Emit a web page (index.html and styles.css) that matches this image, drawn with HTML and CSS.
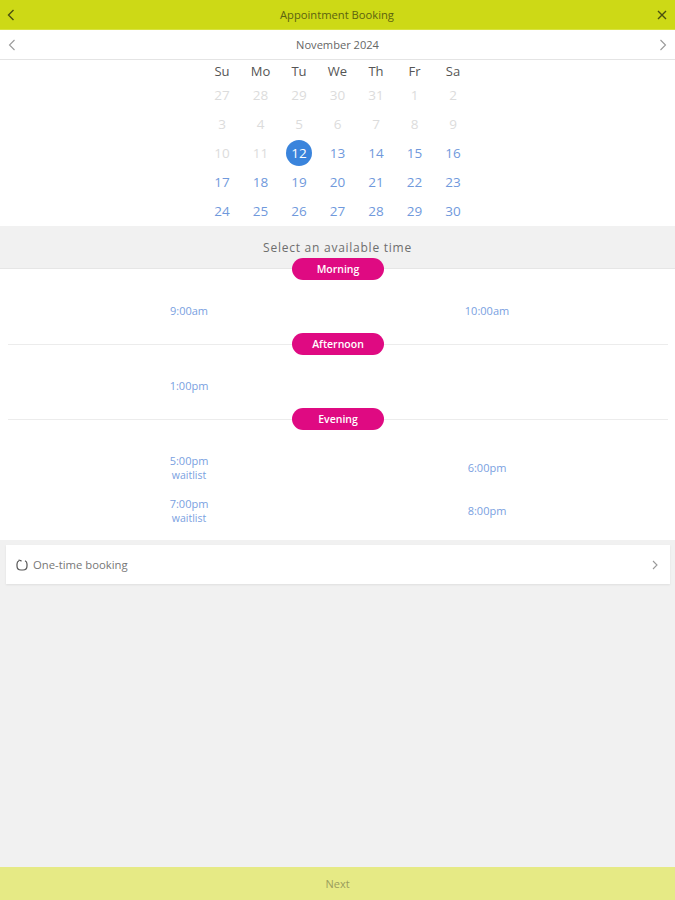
FILE: index.html
```html
<!DOCTYPE html>
<html lang="en">
<head>
  <meta charset="UTF-8" />
  <title>Appointment Booking</title>
  <link rel="stylesheet" href="styles.css">
</head>
<body>
  <div class="page">
    <header class="topbar">
      <svg class="icon" width="12" height="14" viewBox="0 0 12 14"><path d="M7.5 2 L2.5 7 L7.5 12" /></svg>
      <span class="topbar-title">Appointment Booking</span>
      <svg class="icon" width="12" height="12" viewBox="0 0 12 12"><path d="M2 2 L10 10 M10 2 L2 10" /></svg>
    </header>

    <div class="month-bar">
      <svg class="icon-light" width="10" height="14" viewBox="0 0 10 14"><path d="M7.5 2 L2.5 7 L7.5 12" /></svg>
      <span>November 2024</span>
      <svg class="icon-light" width="10" height="14" viewBox="0 0 10 14"><path d="M2.5 2 L7.5 7 L2.5 12" /></svg>
    </div>

    <div class="calendar">
      <div class="week week-head">
        <span>Su</span><span>Mo</span><span>Tu</span><span>We</span><span>Th</span><span>Fr</span><span>Sa</span>
      </div>
      <div class="week off">
        <span>27</span><span>28</span><span>29</span><span>30</span><span>31</span><span>1</span><span>2</span>
      </div>
      <div class="week off">
        <span>3</span><span>4</span><span>5</span><span>6</span><span>7</span><span>8</span><span>9</span>
      </div>
      <div class="week">
        <span class="muted">10</span><span class="muted">11</span><span><b class="today">12</b></span><span>13</span><span>14</span><span>15</span><span>16</span>
      </div>
      <div class="week">
        <span>17</span><span>18</span><span>19</span><span>20</span><span>21</span><span>22</span><span>23</span>
      </div>
      <div class="week">
        <span>24</span><span>25</span><span>26</span><span>27</span><span>28</span><span>29</span><span>30</span>
      </div>
    </div>

    <div class="select-title">Select an available time</div>

    <section class="times">
      <div class="period-head first"><span class="pill">Morning</span></div>
      <div class="slots">
        <a class="slot">9:00am</a>
        <a class="slot">10:00am</a>
      </div>

      <div class="period-head"><span class="pill">Afternoon</span></div>
      <div class="slots">
        <a class="slot">1:00pm</a>
      </div>

      <div class="period-head"><span class="pill">Evening</span></div>
      <div class="slots slots-evening">
        <a class="slot">5:00pm<small>waitlist</small></a>
        <a class="slot">6:00pm</a>
        <a class="slot">7:00pm<small>waitlist</small></a>
        <a class="slot">8:00pm</a>
      </div>
    </section>

    <div class="option-card">
      <svg class="repeat" width="12" height="12" viewBox="0 0 12 12"><path d="M3 1.8 C1.6 2.4 1 3.4 1 5 L1 7 C1 9.6 2.4 11 5 11 L7 11 C9.6 11 11 9.6 11 7 L11 5 C11 3.4 10.4 2.4 9 1.8" /><path d="M2.6 1 L5 1.6 L5 2.6" /></svg>
      <span class="option-label">One-time booking</span>
      <svg class="icon-light" width="8" height="10" viewBox="0 0 8 10"><path d="M2 1 L6 5 L2 9" /></svg>
    </div>

    <footer class="next-bar">Next</footer>
  </div>
</body>
</html>
```

FILE: styles.css
```css
* {
  box-sizing: border-box;
}
body {
  margin: 0;
  font-family: "Open Sans", sans-serif;
  background-color: #f1f1f1;
}
.page {
  display: flex;
  flex-direction: column;
  height: 900px;
}
svg path {
  fill: none;
}
.topbar {
  display: flex;
  justify-content: space-between;
  align-items: center;
  height: 30px;
  padding: 0 7px 0 6px;
  background-color: #cdd916;
  border-bottom: 1px solid #d8e23f;
  color: #5c6310;
  font-size: 11.2px;
}
.icon path {
  stroke: #4a5010;
  stroke-width: 1.4;
}
.icon-light path {
  stroke: #9a9a9a;
  stroke-width: 1.1;
}
.month-bar {
  display: flex;
  justify-content: space-between;
  align-items: center;
  height: 30px;
  padding: 0 7px;
  background-color: #fff;
  border-bottom: 1px solid #e4e4e4;
  color: #666;
  font-size: 11.1px;
}
.calendar {
  height: 166px;
  background-color: #fff;
}
.week {
  display: grid;
  grid-template-columns: repeat(7, 38.5px);
  justify-content: center;
  align-items: center;
  height: 29px;
  color: #7099dc;
  font-size: 13.5px;
  text-align: center;
}
.week-head {
  height: 20px;
  padding-top: 1px;
  color: #555;
  font-size: 13px;
}
.off,
.muted {
  color: #dcdcdc;
}
.today {
  display: block;
  width: 26px;
  height: 26px;
  margin: 0 auto;
  border-radius: 50%;
  background-color: #3a84dc;
  color: #fff;
  font-weight: 400;
  line-height: 26px;
}
.select-title {
  height: 43px;
  padding-top: 13px;
  border-bottom: 1px solid #e6e6e6;
  color: #6e6e6e;
  font-size: 12px;
  letter-spacing: 0.75px;
  text-align: center;
}
.times {
  height: 271px;
  background-color: #fff;
}
.period-head {
  display: flex;
  align-items: center;
  height: 22px;
  padding: 0 7px 0 8px;
}
.period-head::before,
.period-head::after {
  content: "";
  flex: 1;
  height: 1px;
  background-color: #ececec;
}
.period-head.first {
  margin-top: -11px;
  position: relative;
}
.period-head.first::before,
.period-head.first::after {
  background-color: transparent;
}
.pill {
  width: 92px;
  height: 22px;
  border-radius: 11px;
  background-color: #df0a82;
  color: #fff;
  font-size: 10.5px;
  font-weight: 600;
  line-height: 22px;
  text-align: center;
}
.slots {
  display: grid;
  grid-template-columns: 298px 298px;
  grid-auto-rows: 43px;
  padding: 9px 0 1px 40px;
}
.slots-evening {
  padding-top: 16px;
}
.slot {
  display: flex;
  flex-direction: column;
  justify-content: center;
  align-items: center;
  color: #7a9fdf;
  font-size: 11px;
  line-height: 14px;
}
.slot small {
  font-size: 10.5px;
}
.option-card {
  display: flex;
  justify-content: space-between;
  align-items: center;
  height: 39px;
  margin: 5px 5px 0 6px;
  padding: 0 11px 0 10px;
  background-color: #fff;
  box-shadow: 0 1px 2px rgba(0, 0, 0, 0.08);
}
.repeat path {
  stroke: #555;
  stroke-width: 1.2;
}
.option-label {
  flex: 1;
  margin-left: 5px;
  color: #777;
  font-size: 11.3px;
}
.next-bar {
  height: 33px;
  margin-top: auto;
  background-color: #e6ea85;
  color: #9a9c5c;
  font-size: 11px;
  line-height: 34px;
  text-align: center;
}
```
